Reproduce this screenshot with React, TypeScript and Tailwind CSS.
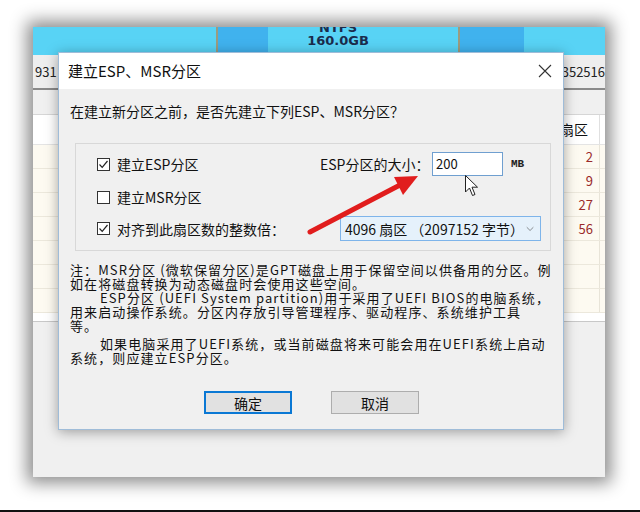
import { ChevronDown } from 'lucide-react';

const cjk = { fontFamily: '"Noto Sans CJK SC", "Noto Sans", sans-serif' };

const rowValues = ['2', '9', '27', '56', '', '', ''];

function CheckBox({ checked }: { checked: boolean }) {
  return (
    <span className="w-[13px] h-[13px] border border-[#333] bg-white flex items-center justify-center shrink-0">
      {checked && (
        <svg width="11" height="11" viewBox="0 0 11 11">
          <polyline points="1.5,5.5 4.2,8.3 9.5,2" fill="none" stroke="#222" strokeWidth="1.2" />
        </svg>
      )}
    </span>
  );
}

function BackgroundWindow() {
  return (
    <div className="absolute left-[33px] top-[27px] w-[572px] h-[450px] bg-[#f0f0f0] flex flex-col shadow-[0_0_16px_6px_rgba(0,0,0,0.45)]">
      {/* disk bar */}
      <div className="h-[28px] flex overflow-hidden">
        <div className="w-[183px] bg-[#58d3f5]" />
        <div className="w-[2px] bg-[#9b9c80]" />
        <div className="w-[50px] bg-[#40b2ee]" />
        <div className="w-[190px] bg-[#58d3f5] relative">
          <div
            className="absolute left-0 right-[50px] -top-[6px] text-center text-[13px] leading-[13px] font-bold text-[#1b2c4c]"
            style={{ fontFamily: '"DejaVu Sans", sans-serif' }}
          >
            NTFS
            <br />
            160.0GB
          </div>
        </div>
        <div className="w-[2px] bg-[#9b9c80]" />
        <div className="w-[64px] bg-[#40b2ee]" />
        <div className="flex-1 bg-[#58d3f5]" />
      </div>
      {/* info row */}
      <div
        className="h-[35px] bg-[#eeeeee] border-b-2 border-[#8a8a8a] flex items-center justify-between text-[13px] text-[#222] pl-[2px]"
        style={cjk}
      >
        <span>931</span>
        <span>352516</span>
      </div>
      <div className="h-[25px] bg-[#f0f0f0] border-b border-[#d6d6d6]" />
      {/* table */}
      <div className="h-[207px] bg-white flex flex-col overflow-hidden border-b border-[#c8c8c8]" style={cjk}>
        <div className="h-[30px] shrink-0 flex justify-end items-center border-b border-[#e4e4e4]">
          <span className="w-[42px] text-[14px] text-[#111] pl-[2px] border-r border-[#e0e0e0] h-full flex items-center">扇区</span>
          <span className="w-[5px]" />
        </div>
        {rowValues.map((v, i) => (
          <div key={i} className="h-[24px] shrink-0 flex justify-end bg-[#fdfaf1] border-b border-[#ece8dc]">
            <span className="w-[42px] text-right pr-[6px] text-[13px] text-[#9a2a2a] border-r border-[#e8e4d8] flex items-center justify-end">
              {v}
            </span>
            <span className="w-[5px]" />
          </div>
        ))}
      </div>
    </div>
  );
}

function Dialog() {
  return (
    <div
      className="absolute left-[58px] top-[52px] w-[506px] h-[378px] border border-[#9fbcd8] bg-[#f0f0f0] flex flex-col shadow-[0_2px_12px_rgba(0,0,0,0.35)]"
      style={cjk}
    >
      {/* title bar */}
      <div className="h-[36px] shrink-0 bg-white flex items-center justify-between pl-[9px] pr-[11px]">
        <span className="text-[15px] text-[#111]">建立ESP、MSR分区</span>
        <svg width="14" height="14" viewBox="0 0 14 14">
          <path d="M1 1 L13 13 M13 1 L1 13" stroke="#333" strokeWidth="1.1" />
        </svg>
      </div>

      <div className="flex-1 flex flex-col pl-[11px] pt-[15px] text-[14px] leading-[14px] text-[#111]">
        <div className="whitespace-nowrap">在建立新分区之前，是否先建立下列ESP、MSR分区？</div>

        {/* group box */}
        <div className="mt-[25px] ml-[5px] w-[476px] h-[108px] border border-[#d8d8d8] pl-[21px] pt-[8px] flex flex-col">
          <div className="h-[24px] flex items-center">
            <div className="w-[223px] flex items-center gap-[7px]">
              <CheckBox checked />
              <span>建立ESP分区</span>
            </div>
            <span className="w-[112px] whitespace-nowrap">ESP分区的大小：</span>
            <div className="w-[71px] h-[24px] border border-[#6f9fd0] bg-white flex items-center pl-[3px] text-[13px]">
              200
            </div>
            <span
              className="ml-[8px] text-[11px] font-bold text-[#222]"
              style={{ fontFamily: '"Liberation Mono", monospace' }}
            >
              MB
            </span>
          </div>
          <div className="h-[24px] mt-[9px] flex items-center gap-[7px]">
            <CheckBox checked={false} />
            <span>建立MSR分区</span>
          </div>
          <div className="h-[25px] mt-[7px] flex items-center">
            <div className="w-[243px] flex items-center gap-[7px]">
              <CheckBox checked />
              <span className="whitespace-nowrap">对齐到此扇区数的整数倍：</span>
            </div>
            <div className="w-[201px] h-[25px] border border-[#7eb4ea] bg-[#e5f1fb] flex items-center justify-between pl-[4px] pr-[4px] text-[14px]">
              <span className="whitespace-nowrap">4096 扇区 （2097152 字节）</span>
              <ChevronDown size={14} strokeWidth={1.3} className="text-[#555]" />
            </div>
          </div>
        </div>

        {/* note */}
        <div className="mt-[12px] whitespace-nowrap text-[13px] leading-[14px] tracking-[1.1px]">
          <div>注：MSR分区 (微软保留分区)是GPT磁盘上用于保留空间以供备用的分区。例</div>
          <div>如在将磁盘转换为动态磁盘时会使用这些空间。</div>
          <div className="pl-[30px]">ESP分区 (UEFI System partition)用于采用了UEFI BIOS的电脑系统，</div>
          <div>用来启动操作系统。分区内存放引导管理程序、驱动程序、系统维护工具</div>
          <div>等。</div>
          <div className="pl-[30px] mt-[4px]">如果电脑采用了UEFI系统，或当前磁盘将来可能会用在UEFI系统上启动</div>
          <div>系统，则应建立ESP分区。</div>
        </div>

        {/* buttons */}
        <div className="mt-auto mb-[15px] ml-[134px] flex gap-[39px]">
          <button className="w-[88px] h-[23px] bg-[#e1e1e1] border-2 border-[#0a78d4] text-[14px] flex items-center justify-center">
            确定
          </button>
          <button className="w-[88px] h-[23px] bg-[#e1e1e1] border border-[#adadad] text-[14px] flex items-center justify-center">
            取消
          </button>
        </div>
      </div>
    </div>
  );
}

export default function App() {
  return (
    <div className="relative w-[640px] h-[512px] overflow-hidden bg-white">
      <BackgroundWindow />
      <Dialog />

      {/* red arrow */}
      <svg className="absolute left-0 top-0 pointer-events-none" width="640" height="512">
        <line x1="310" y1="232" x2="400" y2="185" stroke="#e11d1d" strokeWidth="5" strokeLinecap="round" />
        <polygon points="418,176 394,177 403,195" fill="#e11d1d" />
      </svg>

      {/* mouse cursor */}
      <svg className="absolute left-[465px] top-[175px] pointer-events-none" width="14" height="22" viewBox="0 0 14 22">
        <path d="M0.5 0.5 L0.5 17 L4.5 13 L7.5 20.5 L10 19.5 L7 12.2 L12.5 12.2 Z" fill="white" stroke="#222" strokeWidth="1" />
      </svg>

      <div className="absolute left-0 bottom-0 w-full h-[2px] bg-[#111]" />
    </div>
  );
}
